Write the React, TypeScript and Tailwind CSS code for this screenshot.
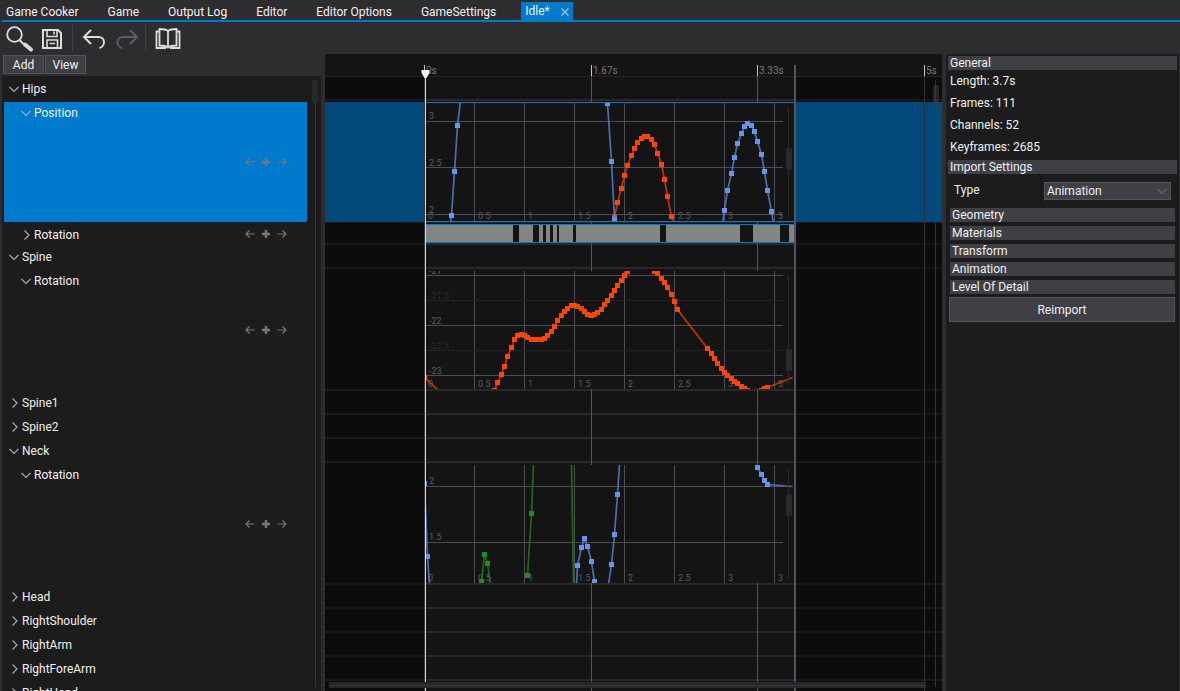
import React from "react";

type Point = [number, number];
type Curve = { color: string; line: Point[]; keys: Point[] };
type Label = { x: number; y: number; text: string; dim?: boolean };
type CurveView = {
  top: number;
  curves: Curve[];
  lines: number[];
  faint: number[];
  labels: Label[];
  thumb: string;
};
type Track = {
  name: string;
  level: 0 | 1;
  open: boolean;
  kind: "group" | "curve" | "bar";
  selected?: boolean;
  view?: CurveView;
};

const BLUE = "#6495ed";
const ORANGE = "#ff4500";
const GREEN = "#228b22";

const curve = (color: string, keys: Point[], before: Point[] = [], after: Point[] = []): Curve => ({
  color,
  keys,
  line: [...before, ...keys, ...after],
});

const positionView: CurveView = {
  top: 103,
  lines: [121, 167, 214],
  faint: [],
  labels: [
    { x: 429, y: 119, text: "3" },
    { x: 429, y: 166, text: "2.5" },
    { x: 429, y: 213, text: "2" },
  ],
  thumb: "top-[45px]",
  curves: [
    curve(BLUE, [[451, 215], [454, 171], [457, 125]], [[450, 223]], [[460, 100]]),
    curve(ORANGE, [
      [614, 217], [617, 202], [621, 188], [624, 175], [627, 165], [631, 155], [634, 148], [637, 142], [641, 138],
      [644, 136], [647, 136], [651, 139], [654, 144], [657, 153], [661, 164], [664, 179], [667, 196], [671, 216],
    ], [[613, 223]], [[673, 223]]),
    curve(BLUE, [[607, 103], [611, 161], [614, 219]]),
    curve(BLUE, [
      [724, 210], [727, 190], [731, 173], [734, 157], [737, 143], [741, 133], [744, 126], [747, 123],
      [751, 125], [754, 131], [757, 141], [761, 154], [764, 171], [767, 190], [771, 211],
    ], [[722, 223]], [[773, 223]]),
  ],
};

const spineView: CurveView = {
  top: 271,
  lines: [275, 325, 375],
  faint: [300, 350],
  labels: [
    { x: 429, y: 274, text: "-21" },
    { x: 429, y: 299, text: "-21.5", dim: true },
    { x: 429, y: 324, text: "-22" },
    { x: 429, y: 349, text: "-22.5", dim: true },
    { x: 429, y: 374, text: "-23" },
  ],
  thumb: "top-[78px]",
  curves: [
    curve(ORANGE, [[424, 377]], [], [[438, 390]]),
    curve(ORANGE, [
      [494, 390], [497, 382], [501, 374], [504, 366], [507, 356], [511, 347], [514, 339], [517, 335], [521, 334],
      [524, 335], [527, 337], [531, 339], [534, 339], [537, 339], [541, 339], [544, 338], [547, 335], [551, 331],
      [554, 326], [557, 320], [561, 315], [564, 311], [567, 308], [571, 305], [574, 305], [577, 306], [581, 308],
      [584, 311], [587, 314], [591, 315], [594, 314], [597, 312], [601, 309], [604, 304], [607, 300], [611, 295],
      [614, 290], [617, 285], [621, 280], [624, 275], [627, 271],
    ]),
    curve(ORANGE, [
      [654, 271], [657, 273], [661, 278], [664, 282], [667, 287], [671, 294], [674, 301], [677, 309], [707, 348],
      [711, 353], [714, 358], [717, 363], [721, 368], [724, 372], [727, 375], [731, 378], [734, 381], [737, 383],
      [741, 386], [744, 388], [747, 390],
    ]),
    curve(ORANGE, [[761, 390], [764, 388], [767, 387]], [], [[792, 377]]),
  ],
};

const neckView: CurveView = {
  top: 465,
  lines: [486, 542],
  faint: [],
  labels: [
    { x: 429, y: 484, text: "2" },
    { x: 429, y: 540, text: "1.5" },
  ],
  thumb: "top-[29px]",
  curves: [
    curve(BLUE, [[424, 483], [427, 556]], [], [[429, 584]]),
    curve(GREEN, [[481, 581], [484, 554], [487, 563]], [], [[490, 584]]),
    curve(GREEN, [[527, 575], [531, 513]], [], [[533, 464]]),
    curve(GREEN, [], [[571, 464], [573, 584]]),
    curve(BLUE, [[577, 565], [581, 547], [584, 538], [587, 546], [591, 561], [594, 581]], [[576, 584]]),
    curve(BLUE, [[611, 564], [614, 534], [617, 494]], [[608, 584]], [[619, 464]]),
    curve(BLUE, [[757, 467], [761, 474], [764, 480], [767, 484]], [], [[792, 486]]),
  ],
};

const tracks: Track[] = [
  { name: "Hips", level: 0, open: true, kind: "group" },
  { name: "Position", level: 1, open: true, kind: "curve", selected: true, view: positionView },
  { name: "Rotation", level: 1, open: false, kind: "bar" },
  { name: "Spine", level: 0, open: true, kind: "group" },
  { name: "Rotation", level: 1, open: true, kind: "curve", view: spineView },
  { name: "Spine1", level: 0, open: false, kind: "group" },
  { name: "Spine2", level: 0, open: false, kind: "group" },
  { name: "Neck", level: 0, open: true, kind: "group" },
  { name: "Rotation", level: 1, open: true, kind: "curve", view: neckView },
  { name: "Head", level: 0, open: false, kind: "group" },
  { name: "RightShoulder", level: 0, open: false, kind: "group" },
  { name: "RightArm", level: 0, open: false, kind: "group" },
  { name: "RightForeArm", level: 0, open: false, kind: "group" },
  { name: "RightHand", level: 0, open: false, kind: "group" },
];

const rowHeight = { group: "h-[24px]", curve: "h-[122px]", bar: "h-[22px]" };
const labelHeight = { group: "h-[24px]", curve: "h-[24px]", bar: "h-[24px]" };

const secondMarks = ["0", "0.5", "1", "1.5", "2", "2.5", "3", "3"];
const barGaps: Point[] = [[513, 519], [533, 539], [543, 546], [550, 553], [557, 559], [573, 576], [660, 666], [740, 753], [780, 789]];

function Tabs() {
  const tabs = ["Game Cooker", "Game", "Output Log", "Editor", "Editor Options", "GameSettings"];
  return (
    <nav className="ml-[2px] flex h-[22px] shrink-0 border-b-2 border-[#007acc] pt-[2px]">
      {tabs.map((t) => (
        <button key={t} className="h-[18px] pr-[25px] pl-1 leading-[20px] whitespace-nowrap">{t}</button>
      ))}
      <div className="flex h-[18px] w-[52px] items-center justify-between bg-[#007acc] px-1">
        <button className="leading-[20px]">Idle*</button>
        <button aria-label="Close" className="text-[#a9b4bd]">
          <svg width="8" height="10" viewBox="0 -2 8 10" stroke="currentColor" strokeWidth="1.5">
            <path d="M.5.5l7 7M7.500.5l-7 7" />
          </svg>
        </button>
      </div>
    </nav>
  );
}

function ToolIcon({ label, dim, children }: { label: string; dim?: boolean; children: React.ReactNode }) {
  return (
    <button aria-label={label} className={dim ? "text-[#5c5c66]" : "text-[#dcdcdc]"}>
      <svg width="32" height="32" viewBox="0 0 32 32" fill="none" stroke="currentColor" strokeWidth="2">
        {children}
      </svg>
    </button>
  );
}

function Toolbar() {
  const sep = <span className="mx-[4px] h-[26px] w-px bg-[#3f3f46]" />;
  return (
    <div className="flex h-[32px] shrink-0 items-center pl-[4px]">
      <ToolIcon label="Find">
        <circle cx="10.5" cy="12.5" r="7.300" strokeWidth="1.8" />
        <path d="M15.5 18l4 4" strokeWidth="2" />
        <path d="M21 22.500l6 5" strokeWidth="4" strokeLinecap="round" />
      </ToolIcon>
      <ToolIcon label="Save">
        <path d="M7 8h15l3 3V26H7z" />
        <path d="M11 8v6.500h10V8M18 9.500v3" strokeWidth="1.600" />
        <path d="M11 26v-8h10.500v8M13.500 21.500h5.500" strokeWidth="1.600" />
      </ToolIcon>
      {sep}
      <ToolIcon label="Undo">
        <path d="M14 8l-7 7 7 7M7 15h14.500c3.500 0 5.500 2.500 5.500 5 0 3-2 5.500-4.500 6" />
      </ToolIcon>
      <ToolIcon label="Redo" dim>
        <path d="M21 8l7 7-7 7M28 15H14c-3.500 0-5.500 2.500-5.500 5 0 3 2 5.500 4.500 6" />
      </ToolIcon>
      {sep}
      <ToolIcon label="Documentation">
        <g transform="translate(1 0)">
          <path d="M17 9c-2-1.600-5-2-8.500-2v16.500c3.500 0 6.500.3 8.500 2.200 2-1.900 5-2.200 8.500-2.200V7C22 7 19 7.400 17 9zM17 9v16" strokeWidth="1.800" />
          <path d="M8 9.500H5.500V26H15M26 9.500h2.500V26H19" strokeWidth="1.800" />
        </g>
      </ToolIcon>
    </div>
  );
}

function KeyButtons() {
  return (
    <div className="mr-[17px] ml-auto flex text-[#77777c]">
      {[
        ["Previous keyframe", "M12.500 8H4M7.500 4.500L4 8l3.500 3.500", "1.200"],
        ["Add keyframe", "M8 4v8M4 8h8", "2.400"],
        ["Next keyframe", "M3.500 8H12M8.500 4.500L12 8l-3.500 3.500", "1.200"],
      ].map(([label, d, w]) => (
        <button key={label} aria-label={label}>
          <svg width="16" height="16" viewBox="0 0 16 16" fill="none" stroke="currentColor" strokeWidth={w}>
            <path d={d} />
          </svg>
        </button>
      ))}
    </div>
  );
}

function TrackTree() {
  return (
    <div className="flex w-[319px] shrink-0 flex-col">
      <div className="flex h-[22px] shrink-0 gap-px pt-px pl-px">
        {["Add", "View"].map((t) => (
          <button key={t} className="h-[19px] w-[41px] border border-[#54545c] bg-[#3f3f46] leading-[19px]">{t}</button>
        ))}
      </div>
      <div className="flex min-h-0 flex-1 overflow-hidden bg-[#1c1c1c] pt-px">
        <ul className="ml-[2px] min-w-0 flex-1">
          {tracks.map((t, i) => (
            <li
              key={i}
              className={`flex items-center border-y ${rowHeight[t.kind]} ${t.selected ? "border-[#1c1c1c] bg-[#007acc]" : "border-transparent"}`}
            >
              <button
                className={`-my-px flex items-center gap-[2px] self-start ${labelHeight[t.kind]} ${t.level ? "pl-[16px]" : "pl-[4px]"}`}
              >
                <svg width="12" height="12" viewBox="0 0 12 12" fill="none" stroke={t.selected ? "#8fb4d0" : "#a8a8a8"} strokeWidth="1.200">
                  <path d={t.open ? "M1.500 4L6 8.500 10.500 4" : "M4.500 1.500L9 6l-4.500 4.500"} />
                </svg>
                {t.name}
              </button>
              {t.kind !== "group" && <KeyButtons />}
            </li>
          ))}
        </ul>
        <div className="mt-[3px] mr-[3px] mb-[4px] ml-[5px] flex w-[6px] justify-center bg-[linear-gradient(#333337,#333337)] bg-[length:1px_100%] bg-center bg-no-repeat">
          <div className="h-[22px] w-[6px] bg-[#28282b]" />
        </div>
      </div>
    </div>
  );
}

function CurvePanel({ view }: { view: CurveView }) {
  const { top } = view;
  return (
    <div className="relative z-10 ml-[101px] h-[118px] w-[368px] bg-[#141414]">
      <svg width="368" height="118" viewBox={`426 ${top} 368 118`} className="block overflow-hidden">
        <g fill="#4c4c53">
          {[474, 524, 574, 624, 674, 724, 774].map((x) => (
            <rect key={x} x={x} y={top} width="1" height="118" />
          ))}
          {view.lines.map((y) => (
            <rect key={y} x="426" y={y} width="357" height="1" />
          ))}
        </g>
        {view.faint.map((y) => (
          <rect key={y} x="426" y={y} width="357" height="1" fill="#222224" />
        ))}
        <g className="text-[9px]">
          {view.labels.map((l) => (
            <text key={l.y} x={l.x} y={l.y} fill={l.dim ? "#29292b" : "#5d5d63"}>{l.text}</text>
          ))}
          {secondMarks.map((m, i) => (
            <text key={i} x={428 + i * 50} y={top + 116} fill="#5d5d63">{m}</text>
          ))}
        </g>
        {view.curves.map((c, i) => (
          <g key={i}>
            <polyline
              points={c.line.map(([x, y]) => `${x + 0.5},${y + 0.5}`).join(" ")}
              fill="none"
              stroke={c.color}
              strokeOpacity="0.7"
              strokeWidth="1.700"
            />
            {c.keys.map(([x, y]) => (
              <rect key={x} x={x - 2} y={y - 2} width="5" height="5" fill={c.color} />
            ))}
          </g>
        ))}
      </svg>
      <div className="absolute top-[4px] right-[5px] h-[110px] w-px bg-[#2c2c2f]" />
      <div className={`absolute right-[2px] h-[22px] w-[6px] bg-[#29292c] ${view.thumb}`} />
    </div>
  );
}

function KeyBar() {
  return (
    <div className="relative z-10 ml-[101px] h-[19px] w-[368px] border-y border-[#007acc] bg-[#848484]">
      <svg width="368" height="17" viewBox="426 0 368 17" className="block">
        {barGaps.map(([a, b]) => (
          <rect key={a} x={a} y="0" width={b - a} height="17" fill="#141414" />
        ))}
      </svg>
    </div>
  );
}

function Timeline() {
  const ticks = [
    { at: "left-[99px]", text: "0s" },
    { at: "left-[266px]", text: "1.67s" },
    { at: "left-[432px]", text: "3.33s" },
    { at: "left-[599px]", text: "5s" },
  ];
  return (
    <section className="relative isolate min-w-0 flex-1 overflow-hidden bg-[#141414]">
      <div className="h-[23px] border-b border-[#252528]" />
      {tracks.map((t, i) => (
        <div
          key={i}
          className={`${rowHeight[t.kind]} ${
            t.selected
              ? "border-y border-t-[#141414] border-b-[#29292d] bg-[#007acc] pt-px"
              : t.kind === "curve"
                ? "border-b-2 border-[#29292d] pt-[2px]"
                : t.kind === "bar"
                  ? "border-b-2 border-[#29292d] pt-px"
                  : "border-b-2 border-[#29292d]"
          }`}
        >
          {t.view && <CurvePanel view={t.view} />}
          {t.kind === "bar" && <KeyBar />}
        </div>
      ))}
      {ticks.map((t) => (
        <div key={t.text} className={`absolute top-[11px] bottom-0 w-px bg-[#54545c] ${t.at}`}>
          <div className="h-[11px] bg-[#c8c8c8]" />
          <span className="absolute top-0 left-[2px] text-[10px] leading-[11px] text-[#77777c]">{t.text}</span>
        </div>
      ))}
      <div className="absolute top-[23px] bottom-0 left-0 z-20 w-[100px] bg-black/40" />
      <div className="absolute top-[23px] right-0 bottom-0 left-[471px] z-20 bg-black/40" />
      <div className="absolute top-[11px] bottom-0 left-[469px] z-20 w-[2px] bg-[#54545c]" />
      <div className="absolute top-[20px] bottom-0 left-[100px] z-20 w-px bg-[#dcdcdc]" />
      <svg width="9" height="9" viewBox="0 0 9 9" fill="#f1f1f1" className="absolute top-[16px] left-[96px] z-20">
        <path d="M.5 0h8v3L5.500 8h-2L.5 3z" />
      </svg>
      <div className="absolute top-[26px] right-[6px] bottom-[4px] z-20 w-px bg-[#333337]" />
      <div className="absolute top-[31px] right-[3px] z-20 h-[22px] w-[6px] bg-[#3f3f46]/50" />
      <div className="absolute right-[16px] bottom-[3px] left-[4px] z-20 flex h-[6px] items-center bg-[#28282b]">
        <div className="h-px w-full bg-[#36363a]" />
      </div>
    </section>
  );
}

function Properties() {
  const header = "h-[14px] bg-[#3f3f46] px-[2px] leading-[14px]";
  return (
    <aside className="mr-px w-[233px] shrink-0 bg-[#1c1c1c] py-[2px] pr-[2px] pl-[2px]">
      <h2 className={header}>General</h2>
      {["Length: 3.7s", "Frames: 111", "Channels: 52", "Keyframes: 2685"].map((t) => (
        <p key={t} className="h-[22px] pl-[2px] leading-[22px]">{t}</p>
      ))}
      <h2 className={`mt-[2px] ${header}`}>Import Settings</h2>
      <div className="my-[2px] flex h-[30px] items-center">
        <label htmlFor="type" className="h-[28px] flex-1 self-start border-r-2 border-[#171717] pl-[6px] leading-[28px]">Type</label>
        <div className="relative mr-[6px] ml-[2px] w-[127px]">
          <select id="type" className="block h-[18px] w-full appearance-none border border-[#54545c] bg-[#3f3f46] px-[2px] leading-[16px]">
            <option>Animation</option>
          </select>
          <svg width="12" height="12" viewBox="0 0 12 12" fill="none" stroke="#66666e" strokeWidth="1.200" className="pointer-events-none absolute top-[3px] right-[3px]">
            <path d="M1.500 4L6 8.500 10.500 4" />
          </svg>
        </div>
      </div>
      <div className="mr-[2px] ml-[2px] flex flex-col gap-[4px]">
        {["Geometry", "Materials", "Transform", "Animation", "Level Of Detail"].map((t) => (
          <h3 key={t} className={header}>{t}</h3>
        ))}
      </div>
      <button className="mt-[3px] ml-px block h-[25px] w-[226px] border border-[#54545c] bg-[#3f3f46]">Reimport</button>
    </aside>
  );
}

export default function App() {
  return (
    <main className="flex h-screen flex-col overflow-hidden bg-[#2d2d30] font-['Roboto',sans-serif] text-[12px] text-[#f1f1f1]">
      <Tabs />
      <Toolbar />
      <div className="flex min-h-0 flex-1 gap-[4px] pl-[2px]">
        <TrackTree />
        <Timeline />
        <Properties />
      </div>
    </main>
  );
}
